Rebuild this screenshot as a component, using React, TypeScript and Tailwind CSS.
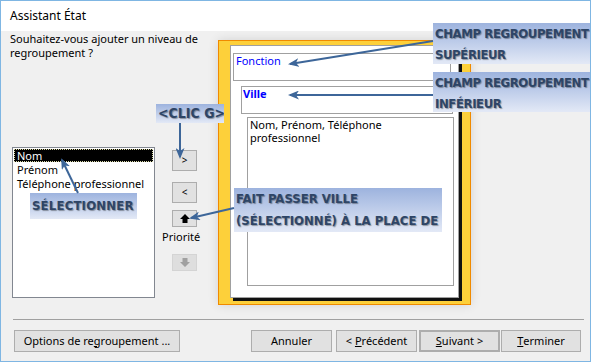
import React from "react";

const ui = "font-['Noto_Sans','Open_Sans',sans-serif] text-[11px] text-black";

function Btn({ className, children }: { className: string; children: React.ReactNode }) {
  return (
    <div className={`flex items-center justify-center bg-[#e1e1e1] border border-[#adadad] ${className}`}>
      {children}
    </div>
  );
}

function Callout({ className, lines }: { className: string; lines: string[] }) {
  return (
    <div
      className={`absolute bg-linear-to-b from-[#9db3de] to-[#e3e9f6] pl-[2px] font-['DejaVu_Sans_Condensed','DejaVu_Sans',sans-serif] font-bold text-[#2e4566] whitespace-nowrap overflow-hidden [text-shadow:1px_1px_1px_rgba(0,0,0,0.35)] ${className}`}
    >
      {lines.map((l) => (
        <div key={l}>{l}</div>
      ))}
    </div>
  );
}

export default function App() {
  return (
    <div className={`relative w-[591px] h-[362px] overflow-hidden bg-[#f0f0f0] border border-[#7fb6e3] flex flex-col ${ui}`}>
      {/* title bar */}
      <div className="h-[30px] bg-white flex items-center pl-[9px] text-[12px]">Assistant État</div>

      {/* body */}
      <div className="h-[288px] flex">
        <div className="w-[217px] flex flex-col">
          <div className="pl-[9px] pt-[1px] leading-[14px]">
            Souhaitez-vous ajouter un niveau de
            <br />
            regroupement ?
          </div>
          <div className="flex mt-[87px]">
            <div className="ml-[11px] w-[143px] h-[151px] bg-white border border-[#828790] p-px leading-[13px] whitespace-nowrap">
              <div className="bg-black text-white border border-dotted border-[#d8d8a8] pl-[2px] h-[13px] leading-[11px]">Nom</div>
              <div className="pl-[3px] mt-px">Prénom</div>
              <div className="pl-[3px] mt-px">Téléphone professionnel</div>
            </div>
            <div className="ml-[5px] flex flex-col items-start">
              <Btn className="ml-[12px] mt-[3px] w-[25px] h-[21px] text-[10px]">&gt;</Btn>
              <Btn className="ml-[12px] mt-[11px] w-[25px] h-[21px] text-[10px]">&lt;</Btn>
              <Btn className="ml-[12px] mt-[7px] w-[25px] h-[17px]">
                <svg width="10" height="9" viewBox="0 0 10 9">
                  <path d="M5 0 L10 5 L7.5 5 L7.5 9 L2.5 9 L2.5 5 L0 5 Z" fill="#000" />
                </svg>
              </Btn>
              <div className="pl-[2px] mt-[3px] leading-[14px]">Priorité</div>
              <div className="ml-[12px] mt-[10px] w-[25px] h-[17px] flex items-center justify-center bg-[#dedede] border border-[#d4d4d4]">
                <svg width="10" height="9" viewBox="0 0 10 9">
                  <path d="M5 9 L10 4 L7.5 4 L7.5 0 L2.5 0 L2.5 4 L0 4 Z" fill="#a0a0a0" />
                </svg>
              </div>
            </div>
          </div>
        </div>

        {/* preview frame */}
        <div className="mt-[9px] w-[253px] h-[265px] border border-[#f08a00] bg-[#fdd03a] pl-[11px] pt-[4px] shadow-[0_0_10px_rgba(0,0,0,0.12)]">
          <div className="w-[229px] h-[253px] bg-white border border-[#a0a0a0] shadow-[3px_3px_0_#111]">
            <div className="ml-[2px] mt-[7px] w-[218px] h-[28px] border border-[#a0a0a0] pl-[2px] leading-[14px] text-[#0000ff]">
              Fonction
            </div>
            <div className="ml-[10px] mt-[5px] w-[212px] h-[28px] border border-[#a0a0a0] pl-[1px] leading-[13px] text-[#0000ff] font-bold">
              Ville
            </div>
            <div className="ml-[16px] mt-[3px] w-[207px] h-[169px] border border-[#a0a0a0] pl-[2px] leading-[13px]">
              Nom, Prénom, Téléphone
              <br />
              professionnel
            </div>
          </div>
        </div>
      </div>

      {/* footer */}
      <div className="ml-[12px] mr-[6px] h-px bg-[#a0a0a0]" />
      <div className="flex mt-[10px] h-[22px]">
        <Btn className="ml-[13px] w-[166px] h-[22px]">
          Options de re<span className="underline">g</span>roupement ...
        </Btn>
        <Btn className="ml-[71px] w-[81px] h-[22px]">Annuler</Btn>
        <Btn className="ml-[4px] w-[81px] h-[22px]">
          &lt; <span className="underline ml-[3px]">P</span>récédent
        </Btn>
        <Btn className="ml-[2px] w-[81px] h-[22px] border-2 border-[#0078d7]">
          <span className="underline">S</span>uivant &gt;
        </Btn>
        <Btn className="ml-[1px] w-[80px] h-[22px]">
          <span className="underline">T</span>erminer
        </Btn>
      </div>

      {/* annotations */}
      <Callout
        className="left-[432px] top-[22px] w-[160px] h-[41px] text-[13px] leading-[21px] tracking-[-0.4px]"
        lines={["CHAMP REGROUPEMENT", "SUPÉRIEUR"]}
      />
      <Callout
        className="left-[432px] top-[71px] w-[160px] h-[40px] text-[13px] leading-[21px] tracking-[-0.4px]"
        lines={["CHAMP REGROUPEMENT", "INFÉRIEUR"]}
      />
      <Callout className="left-[155px] top-[103px] w-[68px] h-[19px] text-[14px] leading-[19px]" lines={["<CLIC G>"]} />
      <Callout className="left-[29px] top-[192px] w-[107px] h-[26px] text-[13px] leading-[26px] tracking-[0.2px]" lines={["SÉLECTIONNER"]} />
      <Callout
        className="left-[233px] top-[187px] w-[208px] h-[44px] text-[13px] leading-[22px]"
        lines={["FAIT PASSER VILLE", "(SÉLECTIONNÉ) À LA PLACE DE"]}
      />

      <svg className="absolute inset-0 pointer-events-none" width="591" height="362">
        <defs>
          <marker id="ah" markerWidth="11" markerHeight="9" refX="9" refY="4.5" orient="auto" markerUnits="userSpaceOnUse">
            <path d="M0 0 L11 4.5 L0 9 L3 4.5 Z" fill="#3d6699" />
          </marker>
        </defs>
        <g stroke="#3d6699" strokeWidth="2" fill="none" markerEnd="url(#ah)">
          <line x1="432" y1="40" x2="289" y2="63" />
          <line x1="432" y1="94" x2="289" y2="94" />
          <line x1="179" y1="122" x2="179" y2="156" />
          <line x1="77" y1="192" x2="61" y2="159" />
          <line x1="233" y1="207" x2="190" y2="217" />
        </g>
      </svg>
    </div>
  );
}
